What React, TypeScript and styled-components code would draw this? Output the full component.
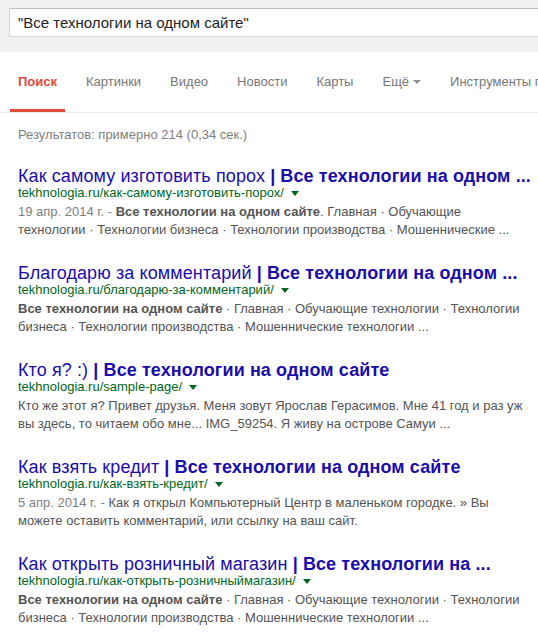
import React from "react";
import styled, { createGlobalStyle } from "styled-components";

const Global = createGlobalStyle`
  html, body { margin: 0; padding: 0; background: #fff; }
  body { overflow: hidden; font-family: "Liberation Sans", Arial, sans-serif; }
`;

const Page = styled.div`
  width: 538px;
  height: 637px;
  overflow: hidden;
  background: #fff;
`;

const Header = styled.div`
  height: 52px;
  background: #f1f1f1;
  padding: 8px 0 0 9px;
  box-sizing: border-box;
`;

const SearchBox = styled.div`
  width: 620px;
  height: 29px;
  box-sizing: border-box;
  background: #fff;
  border: 1px solid #d9d9d9;
  border-top-color: #c0c0c0;
  padding-left: 8px;
  font-size: 15px;
  line-height: 28px;
  color: #222;
  white-space: nowrap;
`;

const Tabs = styled.nav`
  display: flex;
  gap: 13px;
  padding-left: 10px;
  border-bottom: 1px solid #ebebeb;
  white-space: nowrap;
  overflow: hidden;
`;

const Tab = styled.div<{ $active?: boolean }>`
  display: flex;
  align-items: center;
  padding: 22px 8px 19px;
  line-height: 16px;
  font-size: 13px;
  flex-shrink: 0;
  color: ${(p) => (p.$active ? "#dd4b39" : "#777")};
  font-weight: ${(p) => (p.$active ? "bold" : "normal")};
  border-bottom: 3px solid ${(p) => (p.$active ? "#dd4b39" : "transparent")};
`;

const TabArrow = styled.span`
  display: inline-block;
  margin-left: 4px;
  width: 0;
  height: 0;
  border-left: 4px solid transparent;
  border-right: 4px solid transparent;
  border-top: 4px solid #909090;
`;

const Main = styled.main`
  padding: 14px 0 0 18px;
`;

const Stats = styled.div`
  font-size: 13px;
  line-height: 16px;
  color: #808080;
  margin-bottom: 24px;
`;

const Result = styled.div`
  margin-bottom: 25px;
`;

const Title = styled.div`
  font-size: 18px;
  line-height: 18px;
  letter-spacing: 0.1px;
  color: #1a0dab;
  white-space: nowrap;
  b { font-weight: bold; }
`;

const Url = styled.div`
  display: flex;
  align-items: center;
  font-size: 13px;
  line-height: 16px;
  color: #006621;
  white-space: nowrap;
`;

const UrlArrow = styled.span`
  display: inline-block;
  margin-left: 7px;
  margin-top: 1px;
  width: 0;
  height: 0;
  border-left: 4px solid transparent;
  border-right: 4px solid transparent;
  border-top: 5px solid #006621;
`;

const Snippet = styled.div`
  margin-top: 2px;
  font-size: 13px;
  line-height: 18px;
  color: #545454;
  white-space: nowrap;
  b { font-weight: bold; }
`;

const DateText = styled.span`
  color: #808080;
`;

const SITE = "Все технологии на одном сайте";

type R = {
  title: string;
  bold: string;
  url: string;
  snippet: React.ReactNode;
};

const results: R[] = [
  {
    title: "Как самому изготовить порох ",
    bold: "| Все технологии на одном ...",
    url: "tekhnologia.ru/как-самому-изготовить-порох/",
    snippet: (
      <>
        <DateText>19 апр. 2014 г. - </DateText>
        <b>{SITE}</b>. Главная · Обучающие
        <br />
        технологии · Технологии бизнеса · Технологии производства · Мошеннические ...
      </>
    ),
  },
  {
    title: "Благодарю за комментарий ",
    bold: "| Все технологии на одном ...",
    url: "tekhnologia.ru/благодарю-за-комментарий/",
    snippet: (
      <>
        <b>{SITE}</b> · Главная · Обучающие технологии · Технологии
        <br />
        бизнеса · Технологии производства · Мошеннические технологии ...
      </>
    ),
  },
  {
    title: "Кто я? :) ",
    bold: "| Все технологии на одном сайте",
    url: "tekhnologia.ru/sample-page/",
    snippet: (
      <>
        Кто же этот я? Привет друзья. Меня зовут Ярослав Герасимов. Мне 41 год и раз уж
        <br />
        вы здесь, то читаем обо мне... IMG_59254. Я живу на острове Самуи ...
      </>
    ),
  },
  {
    title: "Как взять кредит ",
    bold: "| Все технологии на одном сайте",
    url: "tekhnologia.ru/как-взять-кредит/",
    snippet: (
      <>
        <DateText>5 апр. 2014 г. - </DateText>
        Как я открыл Компьютерный Центр в маленьком городке. » Вы
        <br />
        можете оставить комментарий, или ссылку на ваш сайт.
      </>
    ),
  },
  {
    title: "Как открыть розничный магазин ",
    bold: "| Все технологии на ...",
    url: "tekhnologia.ru/как-открыть-розничныймагазин/",
    snippet: (
      <>
        <b>{SITE}</b> · Главная · Обучающие технологии · Технологии
        <br />
        бизнеса · Технологии производства · Мошеннические технологии ...
      </>
    ),
  },
];

const tabs = ["Поиск", "Картинки", "Видео", "Новости", "Карты", "Ещё", "Инструменты поиска"];

export default function App() {
  return (
    <Page>
      <Global />
      <Header>
        <SearchBox>"Все технологии на одном сайте"</SearchBox>
      </Header>
      <Tabs>
        {tabs.map((t, i) => (
          <Tab key={t} $active={i === 0}>
            {t}
            {t === "Ещё" && <TabArrow />}
          </Tab>
        ))}
      </Tabs>
      <Main>
        <Stats>Результатов: примерно 214 (0,34 сек.)</Stats>
        {results.map((r) => (
          <Result key={r.url}>
            <Title>
              {r.title}
              <b>{r.bold}</b>
            </Title>
            <Url>
              {r.url}
              <UrlArrow />
            </Url>
            <Snippet>{r.snippet}</Snippet>
          </Result>
        ))}
      </Main>
    </Page>
  );
}
